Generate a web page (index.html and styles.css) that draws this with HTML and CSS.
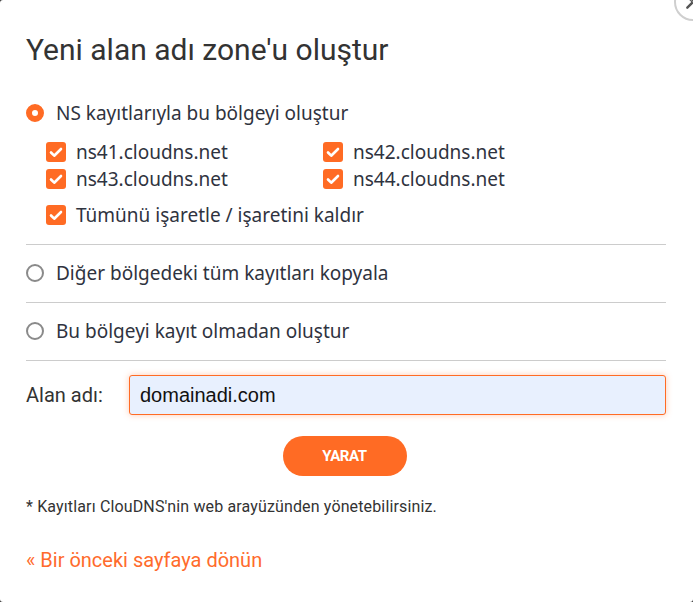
FILE: index.html
```html
<!DOCTYPE html>
<html lang="tr">
<head>
<meta charset="utf-8">
<title>Yeni alan adı zone'u oluştur</title>
<link rel="stylesheet" href="styles.css">
</head>
<body>
<div class="modal">
  <h1 class="title">Yeni alan adı zone'u oluştur</h1>

  <div class="section first">
    <div class="radio-row">
      <span class="radio checked"></span>
      <span class="label">NS kayıtlarıyla bu bölgeyi oluştur</span>
    </div>
    <div class="ns-grid">
      <div class="check-row"><span class="check"><svg viewBox="0 0 20 20"><path d="M5 10.5l3.2 3.2L15 7" /></svg></span><span class="label">ns41.cloudns.net</span></div>
      <div class="check-row"><span class="check"><svg viewBox="0 0 20 20"><path d="M5 10.5l3.2 3.2L15 7" /></svg></span><span class="label">ns42.cloudns.net</span></div>
      <div class="check-row"><span class="check"><svg viewBox="0 0 20 20"><path d="M5 10.5l3.2 3.2L15 7" /></svg></span><span class="label">ns43.cloudns.net</span></div>
      <div class="check-row"><span class="check"><svg viewBox="0 0 20 20"><path d="M5 10.5l3.2 3.2L15 7" /></svg></span><span class="label">ns44.cloudns.net</span></div>
    </div>
    <div class="check-row all"><span class="check"><svg viewBox="0 0 20 20"><path d="M5 10.5l3.2 3.2L15 7" /></svg></span><span class="label">Tümünü işaretle / işaretini kaldır</span></div>
  </div>

  <div class="section">
    <div class="radio-row">
      <span class="radio"></span>
      <span class="label">Diğer bölgedeki tüm kayıtları kopyala</span>
    </div>
  </div>

  <div class="section">
    <div class="radio-row">
      <span class="radio"></span>
      <span class="label">Bu bölgeyi kayıt olmadan oluştur</span>
    </div>
  </div>

  <div class="domain-row">
    <label class="domain-label" for="domain">Alan adı:</label>
    <input id="domain" class="domain-input" type="text" value="domainadi.com">
  </div>

  <div class="actions">
    <button class="btn" type="button">YARAT</button>
  </div>

  <p class="note">* Kayıtları ClouDNS'nin web arayüzünden yönetebilirsiniz.</p>

  <a class="back" href="#">« Bir önceki sayfaya dönün</a>

  <div class="close"><svg viewBox="0 0 36 36"><path d="M12 12l12 12M24 12L12 24" /></svg></div>
</div>
</body>
</html>
```

FILE: styles.css
```css
html, body {
  margin: 0;
  padding: 0;
  background: #3a3a3a;
}

.modal {
  position: relative;
  box-sizing: border-box;
  width: 693px;
  height: 602px;
  background: #ffffff;
  border-radius: 3px;
  padding: 33px 27px 0 26px;
  overflow: hidden;
  color: #333333;
}

.title {
  margin: 0;
  font-family: Roboto, "Liberation Sans", sans-serif;
  font-weight: 400;
  font-size: 30px;
  line-height: 34px;
  color: #333333;
}

.section {
  border-bottom: 1px solid #cccccc;
  padding: 16px 0 17px;
}

.section.first {
  margin-top: 34px;
  padding: 0 0 16px;
}

.label {
  font-family: "Noto Sans", "Open Sans", sans-serif;
  font-size: 19px;
  color: #2f3340;
}

.radio-row {
  display: flex;
  align-items: center;
  gap: 12px;
  height: 24px;
}

.radio {
  box-sizing: border-box;
  width: 18px;
  height: 18px;
  border-radius: 50%;
  border: 2px solid #8a8a8a;
  background: #fff;
  flex: none;
}

.radio.checked {
  border: 6px solid #ff6b24;
}

.ns-grid {
  display: grid;
  grid-template-columns: 277px 1fr;
  padding-left: 20px;
  margin-top: 13px;
}

.check-row {
  display: flex;
  align-items: center;
  gap: 10px;
  height: 27px;
}

.check-row.all {
  padding-left: 20px;
  margin-top: 9px;
}

.check {
  width: 20px;
  height: 20px;
  border-radius: 3px;
  background: #ff6b24;
  flex: none;
  display: flex;
}

.check svg {
  width: 20px;
  height: 20px;
}

.check path {
  fill: none;
  stroke: #ffffff;
  stroke-width: 2.6;
  stroke-linecap: round;
  stroke-linejoin: round;
}

.domain-row {
  display: flex;
  align-items: center;
  margin-top: 14px;
}

.domain-label {
  width: 103px;
  font-family: Roboto, "Liberation Sans", sans-serif;
  font-size: 20px;
  color: #333333;
}

.domain-input {
  box-sizing: border-box;
  flex: 1;
  height: 40px;
  border: 1px solid #ff6b24;
  border-radius: 3px;
  background: #e8f0fe;
  box-shadow: 0 0 6px rgba(255, 107, 36, 0.35);
  padding: 0 10px;
  font-family: "Liberation Sans", Arial, sans-serif;
  font-size: 20px;
  color: #111111;
  outline: none;
}

.actions {
  display: flex;
  justify-content: center;
  margin-top: 21px;
  padding-right: 3px;
}

.btn {
  width: 124px;
  height: 40px;
  border: none;
  border-radius: 20px;
  background: #ff6b24;
  color: #ffffff;
  font-family: Roboto, "Liberation Sans", sans-serif;
  font-weight: 700;
  font-size: 15px;
  letter-spacing: -0.4px;
  cursor: pointer;
}

.note {
  margin: 21px 0 0;
  font-family: Roboto, "Liberation Sans", sans-serif;
  font-size: 16px;
  letter-spacing: 0.14px;
  line-height: 20px;
  color: #333333;
}

.back {
  display: block;
  margin-top: 31px;
  font-family: Roboto, "Liberation Sans", sans-serif;
  font-size: 20px;
  line-height: 24px;
  color: #ff6b2c;
  text-decoration: none;
}

.close {
  position: absolute;
  left: 674px;
  top: -17px;
  width: 38px;
  height: 38px;
  box-sizing: border-box;
  border: 2px solid #cfcfcf;
  border-radius: 50%;
  background: #ffffff;
}

.close svg {
  width: 34px;
  height: 34px;
}

.close path {
  fill: none;
  stroke: #555555;
  stroke-width: 2.5;
  stroke-linecap: round;
}
```
